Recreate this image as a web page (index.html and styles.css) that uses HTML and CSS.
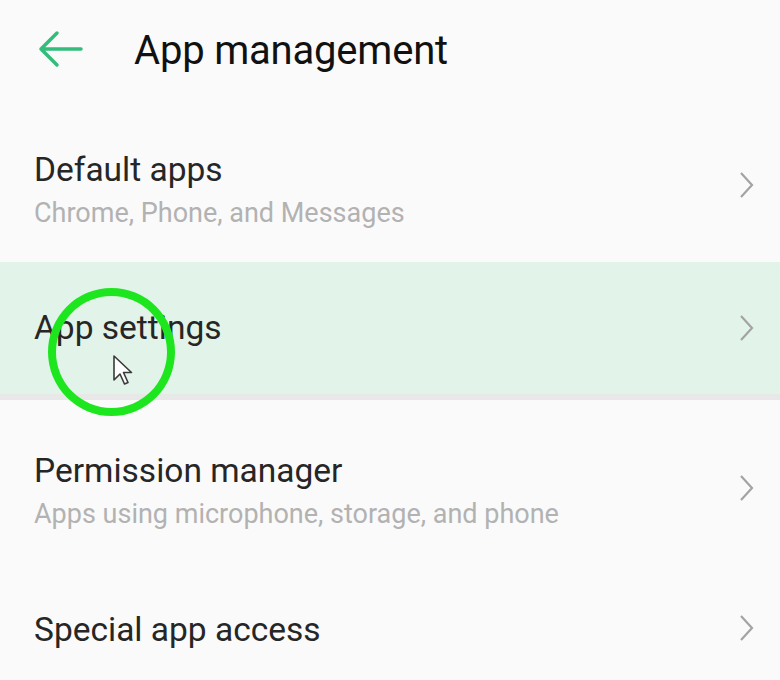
FILE: index.html
```html
<!DOCTYPE html>
<html>
<head>
<meta charset="utf-8">
<link rel="stylesheet" href="styles.css">
</head>
<body>
<div class="screen">
  <header class="topbar">
    <svg class="back" width="48" height="40" viewBox="0 0 48 40">
      <path d="M45 20 H5 M21 4 L5 20 L21 36" fill="none" stroke="#33bd7b" stroke-width="3.5" stroke-linecap="round" stroke-linejoin="round"/>
    </svg>
    <h1 class="title">App management</h1>
  </header>
  <div class="row row-first">
    <div class="text">
      <div class="label">Default apps</div>
      <div class="sub">Chrome, Phone, and Messages</div>
    </div>
    <svg class="chev" width="16" height="26" viewBox="0 0 16 26"><path d="M2 1 L13 13 L2 25" fill="none" stroke="#a3a3a3" stroke-width="2.2"/></svg>
  </div>
  <div class="row row-active">
    <div class="text">
      <div class="label">App settings</div>
    </div>
    <svg class="chev" width="16" height="26" viewBox="0 0 16 26"><path d="M2 1 L13 13 L2 25" fill="none" stroke="#a3a3a3" stroke-width="2.2"/></svg>
    <div class="ring"></div>
    <svg class="cursor" width="24" height="34" viewBox="0 0 24 34">
      <path d="M2 2 L2 26 L8 20 L12.5 30 L16 28.5 L11.5 18.5 L19.5 18.5 Z" fill="#ffffff" stroke="#3a3a3a" stroke-width="1.6" stroke-linejoin="round"/>
    </svg>
  </div>
  <div class="divider"></div>
  <div class="row row-third">
    <div class="text">
      <div class="label">Permission manager</div>
      <div class="sub">Apps using microphone, storage, and phone</div>
    </div>
    <svg class="chev" width="16" height="26" viewBox="0 0 16 26"><path d="M2 1 L13 13 L2 25" fill="none" stroke="#a3a3a3" stroke-width="2.2"/></svg>
  </div>
  <div class="row row-last">
    <div class="text">
      <div class="label">Special app access</div>
    </div>
    <svg class="chev" width="16" height="26" viewBox="0 0 16 26"><path d="M2 1 L13 13 L2 25" fill="none" stroke="#a3a3a3" stroke-width="2.2"/></svg>
  </div>
</div>
</body>
</html>
```
FILE: styles.css
```css
html, body {
  margin: 0;
  padding: 0;
  background: #fafafa;
}
body {
  font-family: Roboto, "Noto Sans", sans-serif;
  color: #222;
  overflow: hidden;
}
.screen {
  width: 780px;
  height: 680px;
  display: flex;
  flex-direction: column;
}
.topbar {
  height: 100px;
  display: flex;
  align-items: center;
  padding-left: 36px;
  gap: 50px;
  flex-shrink: 0;
}
.back {
  margin-top: -2px;
}
.title {
  margin: 0;
  font-size: 40px;
  font-weight: 400;
  color: #111;
  letter-spacing: -0.2px;
}
.row {
  position: relative;
  display: flex;
  align-items: center;
  justify-content: space-between;
  padding: 0 25px 0 34px;
  flex-shrink: 0;
}
.row-first { height: 162px; }
.row-active {
  height: 132px;
  background: #e2f4e9;
}
.divider {
  height: 6px;
  background: #e8e8e8;
  flex-shrink: 0;
}
.row-third { height: 176px; }
.row-last { height: 104px; }
.text {
  display: flex;
  flex-direction: column;
  gap: 6px;
}
.label {
  font-size: 33.5px;
  line-height: 40px;
  color: #262626;
}
.sub {
  font-size: 27px;
  line-height: 34px;
  color: #b2b2b2;
}
.chev {
  display: block;
}
.row-first .text { margin-top: 18px; }
.row-first .chev { margin-top: 8px; }
.row-third .text { margin-top: 6px; }
.row-last .text { margin-top: 4px; }
.ring {
  position: absolute;
  left: 48px;
  top: 26px;
  width: 111px;
  height: 112px;
  border: 8.5px solid #1ee61e;
  border-radius: 50%;
}
.cursor {
  position: absolute;
  left: 112px;
  top: 92px;
}
```
